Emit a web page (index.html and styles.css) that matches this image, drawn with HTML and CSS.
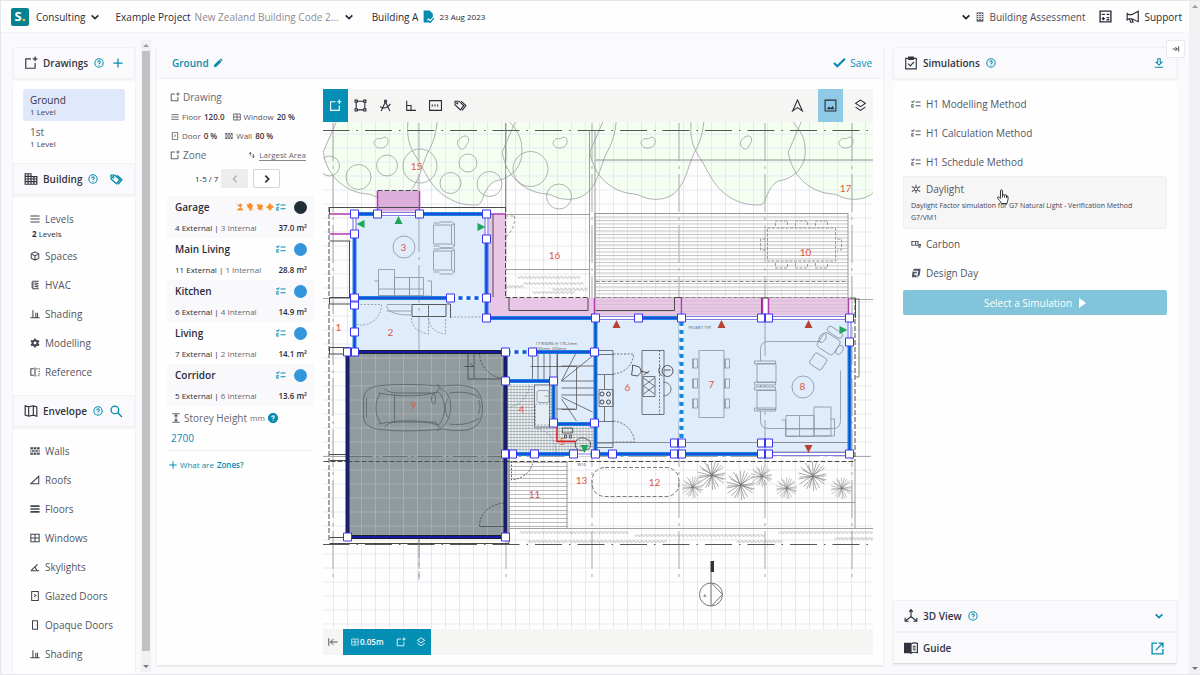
FILE: index.html
```html
<!DOCTYPE html>
<html lang="en">
<head>
  <meta charset="UTF-8">
  <meta name="viewport" content="width=device-width, initial-scale=1.0">
  <title>Example Project - Building A</title>
  <link rel="stylesheet" href="styles.css">
</head>
<body>

  <!-- Icon sprite -->
  <svg class="sprite" aria-hidden="true">
    <symbol id="i-new" viewBox="0 0 24 24"><path d="M12 5H3v16h16v-9M19 1v8M15 5h8"/></symbol>
    <symbol id="i-help" viewBox="0 0 24 24"><circle cx="12" cy="12" r="10"/><path d="M9 10a3 3 0 1 1 4.500 2.500c-1 .6-1.500 1-1.500 2.200M12 16.500v2"/></symbol>
    <symbol id="i-help-fill" viewBox="0 0 24 24"><circle cx="12" cy="12" r="11" fill="currentColor"/><path stroke="#fff" d="M9 10a3 3 0 1 1 4.500 2.500c-1 .6-1.500 1-1.500 2.200M12 16.500v2"/></symbol>
    <symbol id="i-plus" viewBox="0 0 24 24"><path stroke-width="3" d="M12 1v22M1 12h22"/></symbol>
    <symbol id="i-chevron" viewBox="0 0 24 24"><path stroke-width="4" d="M4 8l8 8 8-8"/></symbol>
    <symbol id="i-left" viewBox="0 0 24 24"><path stroke-width="3" d="M16 4l-8 8 8 8"/></symbol>
    <symbol id="i-right" viewBox="0 0 24 24"><path stroke-width="4" d="M8 4l8 8-8 8"/></symbol>
    <symbol id="i-file" viewBox="0 0 24 24"><path fill="currentColor" stroke="none" d="M3 1h11l6 6v6l-5 5-3-3-3 3 5 5H3z"/><path d="M11 19l4 4 7-8"/></symbol>
    <symbol id="i-building" viewBox="0 0 24 24"><path d="M2 3h10v18H2zM12 8h10v13H12M2 7.500h10M2 12h20M2 16.500h20M7 3v18M17 8v13"/></symbol>
    <symbol id="i-tower" viewBox="0 0 24 24"><path fill="currentColor" stroke="none" d="M4 1h16v22H4z"/><path stroke="#fff" stroke-width="2" d="M4 6h16M4 11h16M4 16h16M9 2v18M15 2v18"/></symbol>
    <symbol id="i-tags" viewBox="0 0 24 24"><path d="M2 4h7l9 8-6 8-10-9zM13 4l9 8-7 9"/><circle cx="6" cy="8" r="1"/></symbol>
    <symbol id="i-map" viewBox="0 0 24 24"><path d="M2 3l6 2 8-2 6 2v16l-6-2-8 2-6-2zM8 5v16M16 3v16"/></symbol>
    <symbol id="i-search" viewBox="0 0 24 24"><circle cx="9" cy="9" r="7"/><path d="M14 14l8 8"/></symbol>
    <symbol id="i-lines" viewBox="0 0 24 24"><path d="M1 5h22M1 12h22M1 19h22"/></symbol>
    <symbol id="i-cube" viewBox="0 0 24 24"><path d="M12 2l9 5v10l-9 5-9-5V7zM5 8l7 4 7-4M12 12v9"/></symbol>
    <symbol id="i-hvac" viewBox="0 0 24 24"><path d="M21 3H7v18h14M3 7h4M3 12h4M3 17h4M11 8c3-2 6 2 9 0M11 12c3-2 6 2 9 0M11 16c3-2 6 2 9 0"/></symbol>
    <symbol id="i-shade" viewBox="0 0 24 24"><path d="M1 21h22M7 3v18M14 9v12M18 9v12"/></symbol>
    <symbol id="i-gear" viewBox="0 0 24 24"><circle cx="12" cy="12" r="6" stroke-width="5"/><path stroke-width="4" d="M12 1v4M12 19v4M2 6.500l4 2M18 15.500l4 2M22 6.500l-4 2M6 15.500l-4 2"/></symbol>
    <symbol id="i-ref" viewBox="0 0 24 24"><path d="M9 4H2v16h7M12 1v22"/><path stroke-dasharray="3 3" d="M15 4h7v17h-7"/></symbol>
    <symbol id="i-wall" viewBox="0 0 24 24"><path fill="currentColor" stroke="none" d="M1 3h22v18H1z"/><path stroke="#fff" stroke-width="2" d="M1 9h22M1 15h22M8 3v6M16 3v6M12 9v6M4 9v6M20 9v6M8 15v6M16 15v6"/></symbol>
    <symbol id="i-roof" viewBox="0 0 24 24"><path d="M2 21h19V3z"/></symbol>
    <symbol id="i-floor" viewBox="0 0 24 24"><path stroke-width="4" d="M1 5h22M1 12h22M1 19h22"/></symbol>
    <symbol id="i-window" viewBox="0 0 24 24"><path d="M2 3h20v18H2zM12 3v18M2 12h20"/></symbol>
    <symbol id="i-sky" viewBox="0 0 24 24"><path d="M2 21h20M3 20L18 6M12 12l5 9"/></symbol>
    <symbol id="i-gdoor" viewBox="0 0 24 24"><path d="M4 1h16v22H4zM10 8l4 3-4 3"/></symbol>
    <symbol id="i-odoor" viewBox="0 0 24 24"><path d="M6 2h12v20H6zM14 12h1"/></symbol>
    <symbol id="i-check" viewBox="0 0 24 24"><path stroke-width="4" d="M2 13l6 6L22 5"/></symbol>
    <symbol id="i-pencil" viewBox="0 0 24 24"><path fill="currentColor" stroke="none" d="M2 22l1-6L15 4l5 5L8 21zM16 3l3-2 4 4-2 3z"/></symbol>
    <symbol id="i-clip" viewBox="0 0 24 24"><path d="M3 4h18v18H3zM8 2h8v4H8zM7 13l4 4 6-7"/></symbol>
    <symbol id="i-down" viewBox="0 0 24 24"><path d="M9 2h6v8h4l-7 7-7-7h4zM2 22h20"/></symbol>
    <symbol id="i-list" viewBox="0 0 24 24"><path d="M11 7h12M11 16h12M1 6l3 2 4-4M7 14H2v5h5"/></symbol>
    <symbol id="i-sun" viewBox="0 0 24 24"><circle cx="12" cy="12" r="4"/><path d="M12 2v5M12 17v5M2 6l5 3M17 15l5 3M22 6l-5 3M7 15l-5 3"/></symbol>
    <symbol id="i-co2" viewBox="0 0 24 24"><path d="M9 6H2v9h7M11 6h6v9h-6zM19 13h4v3h-4v4h4"/></symbol>
    <symbol id="i-day" viewBox="0 0 24 24"><path fill="currentColor" stroke="none" d="M7 2h16l-2 15-5 5H2l2-15z"/><path stroke="#fff" d="M4 8h12l-2 13M9 12l4 4M13 12l-5 5"/></symbol>
    <symbol id="i-axis" viewBox="0 0 24 24"><path d="M12 2v11L3 20M12 13l9 7M9 5l3-4 3 4M2 15v6h6M22 15v6h-6"/></symbol>
    <symbol id="i-book" viewBox="0 0 24 24"><path fill="currentColor" d="M1 4h10v16H1z"/><path d="M12 5c3-2 7-2 11-1v16c-4-1-8-1-11 1zM15 9h5M15 12h5M15 15h5"/></symbol>
    <symbol id="i-open" viewBox="0 0 24 24"><path d="M11 2H2v20h20v-9M14 2h8v8M22 2L9 15"/></symbol>
    <symbol id="i-calc" viewBox="0 0 24 24"><path d="M2 2h20v20H2zM5 8h6M14 8h5M5 16h6M8 13v6M14 14h5M14 18h5"/></symbol>
    <symbol id="i-mega" viewBox="0 0 24 24"><path d="M2 6l3 2h5l11-6v18L10 15H5l-3 2zM6 15l2 6h4l-2-6"/></symbol>
    <symbol id="i-image" viewBox="0 0 24 24"><path d="M2 2h20v20H2z"/><path fill="currentColor" stroke="none" d="M5 19l4-5 3 3 4-4 3 6z"/></symbol>
    <symbol id="i-nav" viewBox="0 0 24 24"><path d="M12 2l9 20-9-6-9 6z"/></symbol>
    <symbol id="i-layers" viewBox="0 0 24 24"><path d="M12 2l9 6-9 6-9-6zM3 15l9 6 9-6"/></symbol>
    <symbol id="i-nodes" viewBox="0 0 24 24"><path d="M4 6v12M20 6v12M6 4h12M6 20h12M2 2h4v4H2zM18 2h4v4h-4zM2 18h4v4H2zM18 18h4v4h-4z"/></symbol>
    <symbol id="i-compass" viewBox="0 0 24 24"><path d="M12 5L4 22M12 5l8 17M2 14c7 5 13 3 19-5"/><circle cx="12" cy="4" r="2"/></symbol>
    <symbol id="i-ortho" viewBox="0 0 24 24"><path d="M5 3v18h17M5 12h8v9"/></symbol>
    <symbol id="i-dim" viewBox="0 0 24 24"><path d="M1 3h22v18H1z"/><path stroke-dasharray="2 3" stroke-width="4" d="M5 12h14"/></symbol>
    <symbol id="i-height" viewBox="0 0 24 24"><path d="M3 2h18M3 22h18M12 4v16M8 8l4-4 4 4M8 16l4 4 4-4"/></symbol>
    <symbol id="i-sort" viewBox="0 0 24 24"><path stroke-width="3" d="M7 4v10M3 8l4-4 4 4M16 9v11M12 16l4 4 4-4"/></symbol>
    <symbol id="i-edge" viewBox="0 0 24 24"><path d="M2 3v18M7 12h16M13 5l-7 7 7 7"/></symbol>
    <symbol id="i-collapse" viewBox="0 0 24 24"><path d="M20 4v16M2 12h14M10 6l6 6-6 6"/></symbol>
    <symbol id="i-nouser" viewBox="0 0 24 24"><circle cx="13" cy="7" r="4" fill="currentColor"/><path fill="currentColor" d="M4 21c2-6 14-6 16 0z"/><path d="M2 3l20 18"/></symbol>
    <symbol id="i-nolight" viewBox="0 0 24 24"><path fill="currentColor" d="M7 14a7 7 0 1 1 10 0v3h-7zM11 20h4v2h-4z"/><path d="M2 3l20 18"/></symbol>
    <symbol id="i-noplug" viewBox="0 0 24 24"><path fill="currentColor" d="M5 7h14l-3 12H9zM8 2v5M15 2v5M12 19v4"/><path d="M2 3l20 18M3 18l18-8"/></symbol>
    <symbol id="i-nofan" viewBox="0 0 24 24"><path fill="currentColor" d="M12 12C4 8 9 1 14 3zM12 12c4-8 11-3 9 2zM12 12c8 4 3 11-2 9zM12 12c-4 8-11 3-9-2z"/></symbol>
  </svg>

  <div class="app">
    <header class="topbar">
      <span class="logo">S<b>.</b></span>
      <button class="link-btn strong">Consulting <svg class="icon s"><use href="#i-chevron"/></svg></button>
      <button class="link-btn project">Example Project <span class="muted">New Zealand Building Code 2...</span><svg class="icon s"><use href="#i-chevron"/></svg></button>
      <div class="building">Building A <svg class="icon teal"><use href="#i-file"/></svg><small>23 Aug 2023</small></div>
      <nav class="top-right">
        <button class="link-btn soft"><svg class="icon s dark"><use href="#i-chevron"/></svg><svg class="icon s"><use href="#i-tower"/></svg>Building Assessment</button>
        <button class="link-btn" aria-label="Calculator"><svg class="icon"><use href="#i-calc"/></svg></button>
        <a class="link-btn support" href="#"><svg class="icon l"><use href="#i-mega"/></svg>Support</a>
      </nav>
    </header>

    <main class="workspace">
      <aside class="sidebar">
        <section>
          <h2 class="card-head"><svg class="icon l"><use href="#i-new"/></svg>Drawings<svg class="icon s teal"><use href="#i-help"/></svg><button class="head-btn" aria-label="Add drawing"><svg class="icon s"><use href="#i-plus"/></svg></button></h2>
          <div class="drawings">
            <a href="#" class="drawing active">Ground<small>1 Level</small></a>
            <a href="#" class="drawing">1st<small>1 Level</small></a>
          </div>
        </section>
        <section>
          <h2 class="card-head"><svg class="icon l"><use href="#i-building"/></svg>Building<svg class="icon s teal"><use href="#i-help"/></svg><button class="head-btn" aria-label="Tags"><svg class="icon"><use href="#i-tags"/></svg></button></h2>
          <div class="menu">
            <a href="#"><svg class="icon s"><use href="#i-lines"/></svg>Levels</a>
            <small><b>2</b> Levels</small>
            <a href="#"><svg class="icon s"><use href="#i-cube"/></svg>Spaces</a>
            <a href="#"><svg class="icon s"><use href="#i-hvac"/></svg>HVAC</a>
            <a href="#"><svg class="icon s"><use href="#i-shade"/></svg>Shading</a>
            <a href="#"><svg class="icon s"><use href="#i-gear"/></svg>Modelling</a>
            <a href="#"><svg class="icon s"><use href="#i-ref"/></svg>Reference</a>
          </div>
        </section>
        <section>
          <h2 class="card-head"><svg class="icon l"><use href="#i-map"/></svg>Envelope<svg class="icon s teal"><use href="#i-help"/></svg><button class="head-btn" aria-label="Search"><svg class="icon"><use href="#i-search"/></svg></button></h2>
          <div class="menu">
            <a href="#"><svg class="icon s"><use href="#i-wall"/></svg>Walls</a>
            <a href="#"><svg class="icon s"><use href="#i-roof"/></svg>Roofs</a>
            <a href="#"><svg class="icon s"><use href="#i-floor"/></svg>Floors</a>
            <a href="#"><svg class="icon s"><use href="#i-window"/></svg>Windows</a>
            <a href="#"><svg class="icon s"><use href="#i-sky"/></svg>Skylights</a>
            <a href="#"><svg class="icon s"><use href="#i-gdoor"/></svg>Glazed Doors</a>
            <a href="#"><svg class="icon s"><use href="#i-odoor"/></svg>Opaque Doors</a>
            <a href="#"><svg class="icon s"><use href="#i-shade"/></svg>Shading</a>
          </div>
        </section>
      </aside>
      <div class="scrollbar side"><i class="up"></i><div class="thumb"></div><i class="down"></i></div>

      <section class="editor">
        <div class="editor-head">
          <button class="link-btn title">Ground <svg class="icon s"><use href="#i-pencil"/></svg></button>
          <button class="link-btn save"><svg class="icon"><use href="#i-check"/></svg>Save</button>
        </div>
        <div class="editor-body">
          <div class="zones">
            <h3><svg class="icon s"><use href="#i-new"/></svg>Drawing</h3>
            <p class="stats"><svg class="icon xs"><use href="#i-lines"/></svg>Floor <b>120.0</b><svg class="icon xs gap"><use href="#i-window"/></svg>Window <b>20 %</b></p>
            <p class="stats"><svg class="icon xs"><use href="#i-gdoor"/></svg>Door <b>0 %</b><svg class="icon xs gap"><use href="#i-wall"/></svg>Wall <b>80 %</b></p>
            <h3><svg class="icon s"><use href="#i-new"/></svg>Zone<a href="#" class="sort"><svg class="icon xs"><use href="#i-sort"/></svg><span>Largest Area</span></a></h3>
            <div class="pager"><span>1-5 / 7</span><button disabled aria-label="Previous"><svg class="icon s"><use href="#i-left"/></svg></button><button aria-label="Next"><svg class="icon s"><use href="#i-right"/></svg></button></div>
            <div class="zone-list">
              <a href="#" class="zone"><span class="name">Garage</span><span class="marks"><svg class="icon xs warn"><use href="#i-nouser"/></svg><svg class="icon xs warn"><use href="#i-nolight"/></svg><svg class="icon xs warn"><use href="#i-noplug"/></svg><svg class="icon xs warn"><use href="#i-nofan"/></svg><svg class="icon s teal"><use href="#i-list"/></svg></span><i class="dot dark"></i><span class="sides">4 External | <em>3 Internal</em></span><span class="area">37.0 m²</span></a>
              <a href="#" class="zone"><span class="name">Main Living</span><span class="marks"><svg class="icon s teal"><use href="#i-list"/></svg></span><i class="dot"></i><span class="sides">11 External | <em>1 Internal</em></span><span class="area">28.8 m²</span></a>
              <a href="#" class="zone"><span class="name">Kitchen</span><span class="marks"><svg class="icon s teal"><use href="#i-list"/></svg></span><i class="dot"></i><span class="sides">6 External | <em>4 Internal</em></span><span class="area">14.9 m²</span></a>
              <a href="#" class="zone"><span class="name">Living</span><span class="marks"><svg class="icon s teal"><use href="#i-list"/></svg></span><i class="dot"></i><span class="sides">7 External | <em>2 Internal</em></span><span class="area">14.1 m²</span></a>
              <a href="#" class="zone"><span class="name">Corridor</span><span class="marks"><svg class="icon s teal"><use href="#i-list"/></svg></span><i class="dot"></i><span class="sides">5 External | <em>6 Internal</em></span><span class="area">13.6 m²</span></a>
            </div>
            <label class="storey" for="storey"><svg class="icon s"><use href="#i-height"/></svg>Storey Height <small>mm</small><svg class="icon s teal"><use href="#i-help-fill"/></svg></label>
            <input class="storey-input" id="storey" type="text" value="2700">
            <a href="#" class="what"><svg class="icon xs"><use href="#i-plus"/></svg>What are <b>Zones?</b></a>
          </div>

          <div class="canvas">
            <div class="toolbar">
              <button class="on" aria-label="Add zone"><svg class="icon"><use href="#i-new"/></svg></button>
              <button aria-label="Edit points"><svg class="icon"><use href="#i-nodes"/></svg></button>
              <button aria-label="Measure"><svg class="icon"><use href="#i-compass"/></svg></button>
              <button aria-label="Ortho"><svg class="icon"><use href="#i-ortho"/></svg></button>
              <button aria-label="Dimensions"><svg class="icon"><use href="#i-dim"/></svg></button>
              <button aria-label="Tags"><svg class="icon"><use href="#i-tags"/></svg></button>
              <span class="spacer"></span>
              <button class="wide" aria-label="North"><svg class="icon"><use href="#i-nav"/></svg></button>
              <button class="sel" aria-label="Image"><svg class="icon"><use href="#i-image"/></svg></button>
              <button class="wide" aria-label="Layers"><svg class="icon"><use href="#i-layers"/></svg></button>
            </div>

            <svg class="plan" viewBox="322 122 551 507" preserveAspectRatio="xMidYMin slice">
              <defs>
                <pattern id="grid" x="332.500" y="133.500" width="14" height="14" patternUnits="userSpaceOnUse"><path d="M0 .5H14M.5 0V14" fill="none" stroke="#e6e9f3" stroke-width="1"/></pattern>
                <pattern id="deck" y="213" width="8" height="3.500" patternUnits="userSpaceOnUse"><path d="M0 .5H8" stroke="#b4b4b4" stroke-width=".8"/></pattern>
                <pattern id="deck2" y="462" width="8" height="4" patternUnits="userSpaceOnUse"><path d="M0 .5H8" stroke="#aaa" stroke-width=".8"/></pattern>
                <pattern id="tile" x="507" y="383" width="3" height="3" patternUnits="userSpaceOnUse"><path d="M0 .5H3M.5 0V3" stroke="#8e979d" stroke-width=".6"/></pattern>
                <pattern id="wave" width="4" height="3" patternUnits="userSpaceOnUse"><path d="M0 1.500q1-2 2 0t2 0" fill="none" stroke="#777" stroke-width=".7"/></pattern>
                <path id="treeA" d="M13 122L0 152C4 176 20 189 37 193C43 194 48 194 51 196C61 201 77 201 86 192C98 180 98 163 107 148C112 137 113 130 114 122"/>
                <path id="treeB" d="M0 122C-1 140 2 147 9 158C20 176 24 191 46 201C55 205 63 205 70 205C76 203 75 188 87 181C104 179 116 165 114 148C114 137 108 129 102 122"/>
                <path id="plant" d="M-14-3L14 4M-12-9L12 8M-7-13L7 12M0-14L1 15M7-12L-6 13M12-8L-13 8M14-2L-14 3M-4-11L4 14M4-14L-3 12M-10-6L12 5M10-10L-9 11M-13 1L13 0"/>
                <g id="chair"><path d="M0 0h18v19H0zM6-3h13l2 2v22l-2 2H6M0-2h6M0 21h6M18 0l3-1M18 19l3 2"/></g>
                <g id="seat"><path d="M0 1h5v9H0zM1 1v9"/></g>
              </defs>
              <rect x="322" y="122" width="551" height="507" fill="#fefeff"/>

              <!-- garden -->
              <g fill="#f4fff2" stroke="none"><use href="#treeA" x="322.700"/><use href="#treeA" x="501.700"/><use href="#treeA" x="589.300"/><use href="#treeA" x="787.700"/><use href="#treeB" x="407.300"/><use href="#treeB" x="690.500"/></g>
              <rect x="322" y="122" width="551" height="507" fill="url(#grid)"/>
              <g fill="none" stroke="#9a9e9d" stroke-width=".8">
                <use href="#treeA" x="322.700"/><use href="#treeA" x="501.700"/><use href="#treeA" x="589.300"/><use href="#treeA" x="787.700"/><use href="#treeB" x="407.300"/><use href="#treeB" x="690.500"/>
                <circle cx="329" cy="166" r="10"/><circle cx="358" cy="177" r="12.500"/><circle cx="386.500" cy="165.500" r="10.500"/><circle cx="419.500" cy="166" r="17"/><circle cx="450" cy="183" r="10.500"/><circle cx="467.500" cy="163" r="9"/><circle cx="489" cy="184" r="12.500"/><circle cx="530" cy="169" r="17.500"/><circle cx="558.500" cy="196.500" r="12.500"/>
                <path id="pebble" d="M375 140c3-3 4 0 7-2c4-3 7 2 5 6c-2 5-10 5-12 2c-2-2-2-4 0-6z"/>
                <use href="#pebble" x="179" /><use href="#pebble" x="267"/><use href="#pebble" x="465"/>
                <path id="pebble2" d="M459 139c3-4 9-4 9 0c1 4-2 4-3 8c-2 4-7 2-8-3c0-3 1-4 2-5z"/><use href="#pebble2" x="283"/>
                <path stroke="#777" d="M595 160H873"/>
              </g>

              <!-- axes and boundary -->
              <g fill="none" stroke="#a8a8a8" stroke-width="1" stroke-dasharray="38 5 3 5">
                <path d="M332.500 123V580M418.500 123V580M505.500 123V580M591.500 123V580M678.500 123V580M764.500 123V580M851.500 123V580M322 298.500H355M322 456.500H873M849 299.500H873"/>
              </g>
              <path d="M322 130.500H873M322 544.500H873" stroke="#555" stroke-width="1.200" stroke-dasharray="27 7 1.500 7"/>

              <!-- decks -->
              <rect x="594.500" y="213.500" width="253" height="85" fill="url(#deck)" stroke="#999"/>
              <path d="M595 281.500H848M595 297.500H848" stroke="#888" stroke-dasharray="4 2"/>
              <g fill="none" stroke="#999" stroke-dasharray="3 1.500"><path d="M767 228h68v33h-68zM775 226v-5h12v5M795 226v-5h12v5M815 226v-5h12v5M775 263v5h12v-5M795 263v5h12v-5M815 263v5h12v-5M765 239h-5v11h5M837 239h4v11h-4"/></g>
              <rect x="509" y="461" width="58" height="67" fill="url(#deck2)"/>
              <g fill="none" stroke="#888" stroke-width=".8">
                <path d="M505 214.500H589M589 130V318M594.500 130V318M505 269.500H589M509 528.500H873M566.500 461V528M566.500 502.500H855M854.500 461V528M505 123V214"/>
                <path stroke-dasharray="3 2" d="M505 216h9M514 216c1 12-6 23-20 26"/>
                <rect x="591.500" y="467.500" width="87" height="29" rx="13" stroke="#555" stroke-dasharray="4 2"/>
              </g>
              <g fill="url(#wave)"><rect x="517" y="276" width="63" height="3"/><rect x="523" y="282" width="60" height="3"/><rect x="552" y="288" width="35" height="3"/><rect x="493" y="285" width="30" height="3"/><rect x="532" y="291" width="42" height="3"/><rect x="493" y="276" width="12" height="3"/><rect x="519" y="531" width="53" height="3"/><rect x="527" y="540" width="40" height="3"/><rect x="570" y="531" width="58" height="3"/><rect x="634" y="534" width="130" height="3"/><rect x="568" y="540" width="98" height="3"/><rect x="778" y="531" width="95" height="3"/><rect x="736" y="540" width="46" height="3"/><rect x="834" y="537" width="39" height="3"/></g>
              <g stroke="#777" stroke-width=".6"><use href="#plant" transform="translate(711 475)"/><use href="#plant" transform="translate(692 487) scale(.75)"/><use href="#plant" transform="translate(740 485)"/><use href="#plant" transform="translate(761 476) scale(.75)"/><use href="#plant" transform="translate(786 488) scale(.75)"/><use href="#plant" transform="translate(812 476)"/><use href="#plant" transform="translate(841 488) scale(.75)"/></g>

              <!-- eaves -->
              <g fill="#e9c6e6"><path d="M487 214h18v84h90v20H487zM595 298h86v20h-86zM682 298h79v18h-79zM768 298h80v18h-80z"/></g>
              <rect x="595" y="298" width="253" height="18" fill="url(#deck)" opacity=".5"/>
              <rect x="377" y="191" width="42" height="23" fill="#dcaedb"/>
              <path d="M762 298h5v20h-5z" fill="#fff"/>
              <g fill="none" stroke="#4a4a4a" stroke-width="1">
                <path d="M329 207.500H505M492.500 214V297M508.500 298v12.500h79V298M595 310.500h79v-13h7v20M761 318v-20h7v20M849 298h6v20"/>
                <path stroke-dasharray="5 2" d="M377 190.500h42M505 207V298M505 297.500h84M328.500 207v89M328.500 304v237M323 461.500H855M854.500 298V461"/>
                <path d="M329 207v7M349 241v57M329 241h21M329 297.500h26v6.500h-26zM329 347.500h20v6.500h-20zM329 454.500h18M329 460.500h18M329 537.500h18M329 543.500H508.500V458"/>
                <path stroke="#777" d="M858.500 299v78h-4M855 299h4"/>
              </g>
              <path d="M377 191v23M419 191v23M329 214h22M329 234h22M487 214h18M594 298v18M681 298v18M762 298v18M768 298v18M848 298v18" stroke="#b13cae" stroke-width="1.500"/>

              <!-- rooms -->
              <path fill="#dfecfb" d="M354 214h132v84h1v20h108v136h-42v-30h-48V352H354z"/>
              <rect x="595" y="318" width="254" height="136" fill="#dfecfb"/>
              <path fill="#f1f5f7" d="M505 382h48v42h42v30h-90z"/>
              <path fill="url(#tile)" d="M507 384h46v41h40v28h-86z"/>
              <rect x="347" y="352" width="158" height="185" fill="#919a9c"/>
              <path fill="url(#grid)" opacity=".25" d="M354 214h132v104h109v34H354zM595 318h254v136H595zM347 352h158v185H347z"/>
              <path d="M418.500 214V580M505.500 352V454M678.500 318V454M764.500 318V454" stroke="#8c959c" stroke-width=".8" stroke-dasharray="38 5 3 5"/>
              <path d="M347 456.500h158" stroke="#6b7275" stroke-dasharray="25 4 2 4"/><path d="M347 461.500h158" stroke="#4b5255" stroke-dasharray="5 2"/>

              <!-- furniture -->
              <g fill="none" stroke="#8592a0" stroke-width=".8">
                <circle cx="403.500" cy="247" r="11"/><circle cx="802.500" cy="387" r="11"/>
                <use href="#chair" x="433" y="225"/><use href="#chair" x="433" y="251"/>
                <path d="M378 269.500h16v26h-16zM394 277.500h15v18h-15zM409 277.500h14v18h-14zM374 281h4v15h53v-15h-4M378 289h45"/>
                <path stroke="#333" d="M411.500 304.500h34v12h-34zM428 305v12M446 304h4v14"/><path d="M386 304.500h25M386 306c2 6 8 9 25 9M386 311h25"/>
                <path stroke-dasharray="2 1.500" d="M360 304.500h21c0 10-6 17-15 20c-5 1-8 1-11-1M411 318c0 8 5 14 17 16V304M428 318c1 9 6 15 17 16V318M450 317h37"/>
                <path stroke="#555" d="M532 354v26M537.500 354v26M543.500 354v26M549.500 354v26M556.500 352v72M561 366h35M530 366.500h46v43h-15M561 381l31-25M561 381h34M561 388h34M561 395h34M561 399l15 22M561 397l31 15M557 381V352M561 381l15-29M556 409h19"/>
                <rect x="534" y="385" width="15" height="42" fill="#e6eef5" stroke="#556"/><rect x="536.500" y="390.500" width="12" height="12" rx="2"/><path d="M548 396h-4"/>
                <path stroke-dasharray="2 1.500" d="M535 404h14v21h-14zM507 407c10 0 20-8 22-22M536 429c11 1 19 9 20 25"/>
                <path d="M562 428h10v5h-10zM564 435h2v3h-2zM569 435h2v3h-2zM575 442c3-6 10-5 15 0v5c-5 5-12 5-15 0z" stroke="#444"/>
                <path stroke="#555" d="M595.500 350.500h17v97h-17M596 354.500h17M596 374.500h17M596 421.500h17M596 443h17M598.500 389.500h14v17h-14zM604 375v14M604 407v14" /><circle cx="601.500" cy="394" r="2" stroke="#222"/><circle cx="608" cy="394" r="2" stroke="#222"/><circle cx="601.500" cy="402" r="2" stroke="#222"/><circle cx="608" cy="402" r="2" stroke="#222"/>
                <path stroke="#555" stroke-dasharray="2 1.500" d="M613 354h20c0 10-8 19-20 20M613 421c11 1 20 9 21 21h-21M659 350v64"/>
                <path stroke="#555" d="M641.500 350.500h22v64h-22zM642.500 376.500h12v20h-12zM643 378l11 8-11 8M654 378l-11 8 11 8M663 382c10 1 10 13 0 14"/>
                <path stroke="#333" d="M632 365l7 2 2 5-4 4-6-1 1-6zM640 371l8 2M643 375l6-4"/><circle cx="667" cy="371" r="5.500" stroke="#333"/><path stroke="#333" d="M660 366c-3 4-2 8 2 10M664 370h6"/>
                <path d="M698.500 350.500h25v67h-25z"/>
                <use href="#seat" x="692" y="358"/><use href="#seat" x="692" y="378"/><use href="#seat" x="692" y="398"/><use href="#seat" x="724" y="358"/><use href="#seat" x="724" y="378"/><use href="#seat" x="724" y="398"/>
                <path d="M820 341.500h-52q-8 0-8 8v71q0 8 8 8h65q7 0 7-8v-50"/>
                <path fill="#dfecfb" d="M756.500 363.500h19v19h-19zM754 361h21v3h-21zM754 382h21v3h-21zM756.500 390.500h19v19h-19zM754 387h21v3h-21zM754 408h21v3h-21z"/>
                <path d="M785.500 415.500h28v21h-28zM813.500 407h17v29h-17zM781 420h4v16h49v-17h-4M785 429h45M799 416v20"/>
                <rect x="819" y="335" width="19" height="17" rx="3" transform="rotate(33 828 343)"/><rect x="826" y="329" width="17" height="6" rx="3" transform="rotate(33 834 332)"/><rect x="811" y="355" width="14" height="13" rx="2" transform="rotate(33 818 361)"/><ellipse cx="822" cy="338" rx="3" ry="5" transform="rotate(33 822 338)"/><ellipse cx="839" cy="350" rx="3" ry="5" transform="rotate(33 839 350)"/>
                <path d="M595 442.500h253M770 451.500h78" stroke="#777"/>
              </g>
              <!-- car -->
              <g fill="none" stroke="#5c666c" stroke-width=".9">
                <path d="M363 399c1-8 6-12 14-13c25-3 45-1 65 0c18-2 32-1 37 8c4 9 4 20 0 28c-5 9-20 10-37 7c-20 2-45 3-65 0c-8-1-13-5-14-12z"/>
                <path d="M366 398v19M380 393c-6 8-6 22 0 30M378 393c20 4 40 4 60-1c8 9 8 24 0 33c-20-6-40-5-60-1M394 394v29M384 389c4 3 8 4 14 4h37l4-5M384 427c4-4 8-5 14-5h37l4 6M442 389c11 8 11 28 0 38M449 393c14-2 24 0 30 5M449 424c14 2 24-2 30-6M437 384l4 6M437 431l4-4M478 400c2 5 2 9 0 14M447 399c-3 6-3 12 0 18"/>
                <ellipse cx="433" cy="399" rx="2" ry="5"/>
              </g>
              <g fill="none" stroke="#3b4448" stroke-width=".8"><path d="M467.500 352v27h37M473.500 354v25M464 366.500h9l-3-3M479 526.500h25"/><path stroke-dasharray="2 1.500" d="M479 353c0 13 10 24 25 26M479 526c0-12 10-22 25-23"/><path stroke-dasharray="2 1.500" d="M511 461v19c11-1 20-8 22-20"/></g>

              <!-- zone walls -->
              <g fill="none" stroke-linecap="square">
                <path stroke="#1b84dc" stroke-width="4" d="M354 214V352M354 214H486V318H595V454H505V381H553V424H595M354 298H486M505 352H595M595 318H681M849 318V454H681M595 454H681"/>
                <path stroke="#1c3fe0" stroke-width="1.500" d="M354 214V352M354 214H486V318H595V454H505V381H553V424H595M354 298H486M505 352H595M595 318H681M849 318V454H681M595 454H681"/>
                <path stroke="#17222b" stroke-width="4" d="M347 352H505V537H347z"/><path stroke="#1a18a8" stroke-width="2" d="M347 352H505V537H347z"/>
              </g>
              <!-- openings -->
              <g stroke="#fff" stroke-width="5"><path d="M377 214H419M354 218V234M486 218V239M598 318H638M685 318H761M772 318H845M573 454H590M849 322V342M770 454H845"/></g>
              <g stroke="#7e7be6" stroke-width="1.200"><path d="M377 212.500H419M377 215.500H419M352.500 218V234M355.500 218V234M484.500 218V239M487.500 218V239M598 316.500H638M598 319.500H638M685 316.500H761M685 319.500H761M772 316.500H845M772 319.500H845M573 454H590M847.500 322V342M850.500 322V342M770 452.500H845M770 455.500H845"/></g>
              <g stroke="#eef6ff" stroke-width="5" stroke-dasharray="4 4"><path d="M454 298H484M510 352H530M681 325V440"/></g>
              <path d="M681 322V454" stroke="#168ae0" stroke-width="4" stroke-dasharray="4 4"/>
              <path d="M556.500 427v14.500H575" fill="none" stroke="#e8141c" stroke-width="1.500"/>

              <g class="handles">
                <path d="M350 210h8v8h-8zM373 210h8v8h-8zM415 210h8v8h-8zM482 210h8v8h-8zM350 230h8v8h-8zM482 235h8v8h-8zM350 294h8v8h-8zM350 301h8v8h-8zM446 294h8v8h-8zM482 294h8v8h-8zM482 314h8v8h-8zM591 314h8v8h-8zM634 314h8v8h-8zM677 314h8v8h-8zM757 314h8v8h-8zM764 314h8v8h-8zM845 314h8v8h-8zM845 338h8v8h-8zM350 328h8v8h-8zM343 348h8v8h-8zM350 348h8v8h-8zM501 348h8v8h-8zM528 348h8v8h-8zM590 348h8v8h-8zM501 377h8v8h-8zM549 377h8v8h-8zM549 419h8v8h-8zM590 419h8v8h-8zM501 450h8v8h-8zM508 450h8v8h-8zM530 450h8v8h-8zM569 450h8v8h-8zM591 450h8v8h-8zM608 450h8v8h-8zM670 450h8v8h-8zM677 450h8v8h-8zM670 439h8v8h-8zM677 439h8v8h-8zM757 439h8v8h-8zM764 439h8v8h-8zM757 450h8v8h-8zM764 450h8v8h-8zM845 450h8v8h-8zM343 533h8v8h-8zM501 533h8v8h-8z"/>
              </g>
              <g fill="#1fa65a"><path d="M394 224l4-8 4 8zM364 220v8l-8-4zM477 223v8l8-4zM839 326v8l8-4zM580 445h8l-4 8z"/></g>
              <g fill="#b8432f"><path d="M612 328l4-8 4 8zM717 328l4-8 4 8zM804 328l4-8 4 8zM804 445h8l-4 8z"/></g>

              <!-- section marker -->
              <g fill="none" stroke="#777"><circle cx="710.500" cy="594.500" r="11.500"/><path d="M710.500 572v34M711 583l11 11.500-11 11.500"/></g>
              <path d="M710 561h3.500v11H710z" fill="#333"/>

              <g class="labels">
                <text x="416" y="170">15</text><text x="845" y="192">17</text><text x="554" y="259">16</text><text x="805" y="256">10</text><text x="403" y="251">3</text><text x="390" y="336">2</text><text x="338" y="331">1</text><text x="413" y="409">9</text><text x="521" y="413">4</text><text x="562" y="445">5</text><text x="627" y="391">6</text><text x="711" y="388">7</text><text x="802" y="390">8</text><text x="534" y="498">11</text><text x="581" y="484">13</text><text x="654" y="486">12</text>
              </g>
              <g class="notes"><text x="688" y="329">PELMET TYP.</text><text x="535" y="345">17 RISERS @ 176.2mm</text><text x="535" y="350">150mm, 250mm</text><text x="577" y="466">W16</text><text x="703" y="597">A</text></g>
            </svg>

            <div class="toolbar bottom">
              <button class="edge" aria-label="Collapse panel"><svg class="icon s"><use href="#i-edge"/></svg></button>
              <div class="snap">
                <button><svg class="icon xs"><use href="#i-window"/></svg>0.05m</button>
                <button aria-label="Add"><svg class="icon s"><use href="#i-new"/></svg></button>
                <button aria-label="Layers"><svg class="icon s"><use href="#i-layers"/></svg></button>
              </div>
            </div>
          </div>
        </div>
      </section>

      <aside class="results">
        <button class="collapse" aria-label="Collapse"><svg class="icon xs"><use href="#i-collapse"/></svg></button>
        <section class="sims">
          <h2 class="card-head"><svg class="icon l"><use href="#i-clip"/></svg>Simulations<svg class="icon s teal"><use href="#i-help"/></svg><button class="head-btn" aria-label="Download"><svg class="icon s"><use href="#i-down"/></svg></button></h2>
          <div class="sim-list">
            <a href="#"><svg class="icon s"><use href="#i-list"/></svg>H1 Modelling Method</a>
            <a href="#"><svg class="icon s"><use href="#i-list"/></svg>H1 Calculation Method</a>
            <a href="#"><svg class="icon s"><use href="#i-list"/></svg>H1 Schedule Method</a>
            <a href="#" class="hovered"><svg class="icon s"><use href="#i-sun"/></svg>Daylight
              <small>Daylight Factor simulation for G7 Natural Light - Verification Method G7/VM1</small>
              <svg class="hand" viewBox="0 0 24 30"><path d="M7 17V4c0-3 4-3 4 0v8c4-1 11 0 11 4v5c0 3-2 5-2 8H9c-1-4-7-8-8-12c1-2 4-1 6 2zM11 12v5M15 13v4M19 14v4"/></svg>
            </a>
            <a href="#"><svg class="icon s"><use href="#i-co2"/></svg>Carbon</a>
            <a href="#"><svg class="icon s"><use href="#i-day"/></svg>Design Day</a>
            <button class="run">Select a Simulation <i></i></button>
          </div>
        </section>
        <h2 class="card-head"><svg class="icon l"><use href="#i-axis"/></svg>3D View<svg class="icon s teal"><use href="#i-help"/></svg><button class="head-btn" aria-label="Expand"><svg class="icon s"><use href="#i-chevron"/></svg></button></h2>
        <h2 class="card-head last"><svg class="icon l"><use href="#i-book"/></svg>Guide<a href="#" class="head-btn" aria-label="Open guide"><svg class="icon"><use href="#i-open"/></svg></a></h2>
      </aside>
    </main>
    <div class="scrollbar page"><i class="up"></i><i class="down"></i></div>
  </div>

</body>
</html>
```
FILE: styles.css
```css
* {
  box-sizing: border-box;
}

body {
  margin: 0;
  font-family: "Open Sans", "Noto Sans", sans-serif;
  font-size: 10px;
  line-height: 16px;
  color: #2b2b38;
  background: #fafafd;
}

a {
  color: inherit;
  text-decoration: none;
}

button {
  font: inherit;
  color: inherit;
  background: none;
  border: none;
  padding: 0;
  cursor: pointer;
}

h2, h3, p {
  margin: 0;
  font-weight: 400;
}

.sprite {
  display: none;
}

/* Icons */
.icon {
  width: 13px;
  height: 13px;
  flex: none;
  fill: none;
  stroke: currentColor;
  stroke-width: 2.5;
}

.icon.s {
  width: 10px;
  height: 10px;
}

.icon.xs {
  width: 8px;
  height: 8px;
}

.icon.l {
  width: 14px;
  height: 14px;
  stroke-width: 2;
}

.teal {
  color: #078cb0;
}

.warn {
  color: #fb8c27;
}

.icon.dark {
  color: #22222e;
}

/* Shell */
.app {
  height: 100vh;
  display: grid;
  grid-template: 32px 1fr / 1fr 11px;
  border: 1px solid #e4e6ec;
  border-right: none;
}

.topbar {
  display: flex;
  align-items: center;
  padding: 0 7px 0 10px;
  background: #fefefe;
  border-bottom: 1px solid #f4f4f8;
}

.logo {
  width: 18px;
  height: 18px;
  margin-right: 7px;
  border-radius: 2px;
  background: #04828f;
  color: #fff;
  font-weight: 700;
  font-size: 13px;
  line-height: 17px;
  text-align: center;
}

.logo b {
  color: #f5c542;
}

.link-btn {
  display: flex;
  align-items: center;
  gap: 4px;
}

.strong {
  font-weight: 500;
}

.project {
  margin: 0 18px 0 16px;
}

.muted {
  color: #8c8c94;
  margin-right: 1px;
}

.building {
  display: flex;
  align-items: center;
  gap: 4px;
}

small {
  font-size: 8px;
}

.top-right {
  display: flex;
  margin-left: auto;
  gap: 14px;
}

.soft {
  color: #4a4a56;
}

.workspace {
  grid-area: 2 / 1;
  display: grid;
  grid-template-columns: 124px 10px 1fr 284px;
  min-height: 0;
  padding-left: 11px;
  padding-right: 12px;
}

.scrollbar {
  display: flex;
  flex-direction: column;
  align-items: center;
  justify-content: space-between;
  background: #f1f1f4;
}

.scrollbar.page {
  grid-area: 1 / 2 / 3 / 3;
  padding: 4px 0;
}

.scrollbar.side {
  margin: 7px 0 2px 5px;
  width: 10px;
  padding: 4px 0;
  gap: 4px;
}

.thumb {
  flex: 1;
  width: 8px;
  margin-bottom: 10px;
  background: #c1c1c4;
}

.up, .down {
  border: 3px solid transparent;
}

.up {
  border-top: none;
  border-bottom-color: #999;
}

.down {
  border-bottom: none;
  border-top-color: #777;
}

/* Side menu */
.sidebar {
  margin-top: 14px;
  background: #fefefe;
  overflow: hidden;
  border-left: 1px solid #f3f3f7;
  border-right: 1px solid #f3f3f7;
}

.card-head {
  display: flex;
  align-items: center;
  height: 32px;
  padding: 0 11px 0 10px;
  font-size: 10px;
  font-weight: 600;
  color: #33333f;
  background: #fafafd;
  border: 1px solid #f2f2f5;
  box-shadow: 0 1px 2px rgba(0, 0, 0, 0.08);
}

.card-head > .icon.l {
  margin-right: 5px;
}

.card-head > .teal {
  margin-left: 6px;
}

.head-btn {
  display: flex;
  margin-left: auto;
  color: #078cb0;
}

.drawings {
  padding: 10px;
}

.drawing {
  display: block;
  height: 32px;
  padding: 4px 7px;
  line-height: 15px;
  border-radius: 2px;
  color: #5c5c66;
}

.drawing small {
  display: block;
  line-height: 8px;
  color: #44444e;
}

.active {
  background: #dfe9fb;
  color: #33333f;
  font-weight: 500;
}

.active small {
  font-weight: 400;
}

.menu {
  padding: 9px 17px;
}

.menu a {
  display: flex;
  align-items: center;
  gap: 5px;
  height: 29px;
  color: #55555f;
}

.menu .icon {
  color: #44444e;
}

.menu small {
  display: block;
  height: 8px;
  margin-left: 2px;
  line-height: 1px;
}

/* Editor card */
.editor {
  display: flex;
  flex-direction: column;
  margin: 14px 10px 9px 11px;
  background: #fefefe;
  box-shadow: 0 1px 2px rgba(0, 0, 0, 0.12);
}

.editor-head {
  display: flex;
  justify-content: space-between;
  align-items: center;
  height: 32px;
  padding: 0 11px 0 15px;
  color: #078cb0;
  background: #fafafd;
  border-bottom: 1px solid #f0f0f4;
}

.title {
  font-weight: 600;
}

.editor-body {
  flex: 1;
  display: grid;
  grid-template-columns: 147px 1fr;
  gap: 9px;
  padding: 10px;
  min-height: 0;
}

.zones {
  font-size: 8px;
}

.zones h3 {
  display: flex;
  align-items: center;
  gap: 3px;
  padding-left: 3px;
  font-size: 10px;
  color: #66666f;
}

.stats {
  display: flex;
  align-items: center;
  gap: 3px;
  height: 19px;
  margin-top: 2px;
  padding-left: 4px;
  font-size: 8px;
  color: #55555f;
}

.stats b {
  font-weight: 600;
  color: #33333f;
}

.stats + .stats {
  margin: 0 0 2px;
}

.stats .gap {
  margin-left: 5px;
}

.sort {
  display: flex;
  align-items: center;
  gap: 3px;
  margin-left: auto;
  margin-right: 8px;
  font-size: 8px;
  line-height: 10px;
}

.sort span {
  border-bottom: 1px solid #888;
}

.pager {
  display: flex;
  align-items: center;
  gap: 5px;
  margin: 6px 0 8px;
  padding-left: 28px;
}

.pager span {
  margin-right: -2px;
}

.pager button {
  display: grid;
  place-items: center;
  width: 27px;
  height: 19px;
  border: 1px solid #d5d5d9;
  border-radius: 2px;
  background: #fff;
}

.pager button:disabled {
  background: #ededed;
  border-color: #ededed;
  color: #aaa;
}

.zone {
  display: grid;
  grid-template-columns: auto 1fr 13px;
  grid-template-rows: 22px 20px;
  align-items: center;
  column-gap: 8px;
  padding: 0 7px 0 8px;
}

.zone:nth-child(odd) {
  background: #f9f9fc;
}

.name {
  font-size: 10px;
  font-weight: 600;
}

.marks {
  display: flex;
  gap: 2px;
  align-items: center;
  justify-content: flex-end;
}

.dot {
  width: 13px;
  height: 13px;
  border-radius: 50%;
  background: #3395dc;
}

.dot.dark {
  background: #202e36;
}

.sides {
  grid-column: 1 / 3;
}

.sides em {
  font-style: normal;
  color: #66666f;
}

.area {
  grid-column: 3;
  justify-self: end;
  grid-row: 2;
  white-space: nowrap;
  font-weight: 600;
}

.storey {
  display: flex;
  align-items: center;
  gap: 3px;
  height: 20px;
  margin-top: 2px;
  padding-left: 4px;
  font-size: 10px;
  color: #66666f;
}

.storey-input {
  display: block;
  width: 130px;
  height: 20px;
  margin-left: 4px;
  padding: 0;
  border: none;
  background: none;
  font: inherit;
  font-size: 10px;
  color: #078cb0;
}

.what {
  display: flex;
  align-items: center;
  gap: 3px;
  margin-top: 2px;
  padding: 6px 2px;
  border-top: 1px solid #f0f0f3;
  color: #078cb0;
}

.what b {
  font-weight: 600;
}

.canvas {
  display: flex;
  flex-direction: column;
  min-width: 0;
  min-height: 0;
}

.toolbar {
  display: flex;
  height: 33px;
  flex: none;
  background: #f5f5f4;
  color: #2b2b38;
}

.toolbar .icon {
  stroke-width: 2;
}

.toolbar button {
  display: grid;
  place-items: center;
  width: 25px;
}

.toolbar .wide {
  width: 25px;
  margin: 0 8px;
}

.toolbar .wide:last-child {
  margin: 0 0 0 5px;
}

.toolbar .on {
  background: #058fb5;
  color: #fff;
}

.toolbar .sel {
  background: #8ecae6;
}

.spacer {
  flex: 1;
}

.toolbar.bottom {
  height: 26px;
}

.toolbar .edge {
  width: 20px;
}

.snap {
  display: flex;
  align-items: center;
  gap: 5px;
  padding: 0 3px 0 8px;
  background: #058fb5;
  color: #fff;
}

.snap button {
  width: 15px;
}

.snap button:first-child {
  display: flex;
  align-items: center;
  gap: 1px;
  width: 37px;
  font-size: 8px;
  font-weight: 600;
}

/* Floor plan */
.plan {
  display: block;
  width: 100%;
  flex: 1;
  min-height: 0;
}

.handles {
  fill: #fff;
  stroke: #3a35f0;
}

.labels {
  font-family: Lato, sans-serif;
  font-size: 10px;
  fill: #e0573f;
  text-anchor: middle;
}

.notes {
  font-size: 4px;
  fill: #555;
}

/* Simulation panel */
.results {
  position: relative;
  display: flex;
  flex-direction: column;
  margin: 14px 0 10px;
}

.collapse {
  position: absolute;
  top: -7px;
  right: -8px;
  display: grid;
  place-items: center;
  width: 19px;
  height: 18px;
  border: 1px solid #e8e8ee;
  border-radius: 2px;
  background: #fff;
}

.sims {
  flex: 1;
  background: #fefefe;
}

.results .card-head {
  padding-right: 12px;
}

.results .last {
  border-bottom-color: #ddd;
}

.sim-list {
  padding: 10px;
}

.sim-list > a {
  display: flex;
  flex-wrap: wrap;
  align-items: center;
  gap: 0 5px;
  min-height: 29px;
  padding: 0 8px;
  color: #55555f;
}

.sim-list .hovered {
  position: relative;
  padding: 4px 7px;
  border: 1px solid #efeff2;
  border-radius: 2px;
  background: #f6f6f7;
}

.hovered small {
  flex-basis: 100%;
  margin-top: 3px;
  font-size: 7px;
  line-height: 12px;
  color: #44444e;
}

.hand {
  position: absolute;
  left: 93px;
  top: 12px;
  width: 12px;
  height: 15px;
  fill: #fff;
  stroke: #333;
  stroke-width: 2;
}

.run {
  display: flex;
  align-items: center;
  justify-content: center;
  gap: 7px;
  width: 100%;
  height: 25px;
  margin-top: 3px;
  border-radius: 2px;
  background: #82c5da;
  color: #fff;
  font-weight: 500;
}

.run i {
  border: 5px solid transparent;
  border-left: 7px solid #fff;
  border-right: none;
}
```
